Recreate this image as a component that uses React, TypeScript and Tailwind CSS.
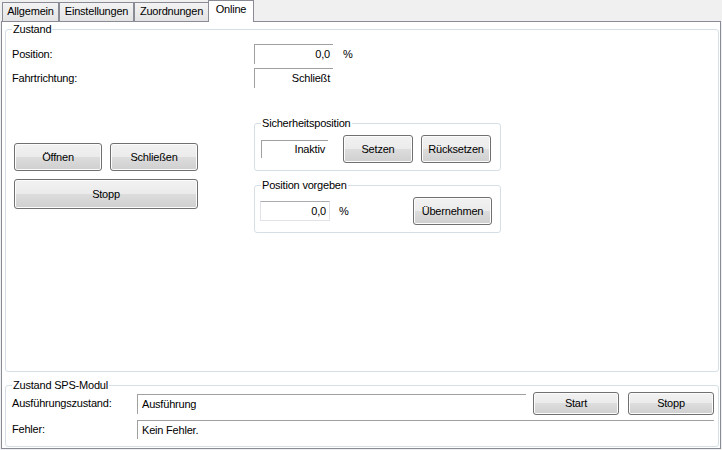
const btn =
  "flex shrink-0 items-center justify-center rounded-[3px] border border-[#707070] bg-[linear-gradient(to_bottom,#f2f2f2_0%,#ebebeb_50%,#dddddd_50%,#cfcfcf_100%)] shadow-[inset_0_0_0_1px_#fcfcfc] text-black";
const box3d = "flex shrink-0 items-center border-t border-l border-[#a0a0a0] text-black";
const group = "flex flex-col rounded-[3px] border border-[#d5dfe5]";
const legend = "-mt-[7px] ml-[6px] w-fit bg-white px-[1px]";

function Tab({ label, selected, w }: { label: string; selected?: boolean; w: string }) {
  if (selected) {
    return (
      <div
        className={`relative z-10 -mb-px -ml-[1px] flex h-[22px] justify-center border-t border-l border-r border-[#898c95] bg-white pt-[2px] ${w}`}
      >
        {label}
      </div>
    );
  }
  return (
    <div
      className={`flex h-[19px] justify-center border-t border-l border-r border-[#898c95] bg-[linear-gradient(to_bottom,#f3f3f3,#e3e3e3)] pt-[2px] ${w}`}
    >
      {label}
    </div>
  );
}

export default function App() {
  return (
    <div className="h-[450px] w-[722px] overflow-hidden bg-[#f0f0f0] font-['Liberation_Sans',Arial,sans-serif] text-[11px] leading-[13px] tracking-[-0.2px] text-black">
      {/* tab strip */}
      <div className="flex h-[21px] items-end pl-[2px]">
        <Tab label="Allgemein" w="w-[57px]" />
        <Tab label="Einstellungen" w="w-[75px]" />
        <Tab label="Zuordnungen" w="w-[75px]" />
        <Tab label="Online" w="w-[46px]" selected />
      </div>

      {/* tab page */}
      <div className="ml-[1px] flex h-[428px] w-[720px] flex-col border border-[#898c95] bg-white">
        {/* Zustand */}
        <div className={`${group} mt-[7px] ml-[3px] mr-[1px] h-[343px]`}>
          <div className={legend}>Zustand</div>

          <div className="mt-[8px] flex h-[20px] items-center">
            <div className="w-[248px] shrink-0 pl-[6px]">Position:</div>
            <div className={`${box3d} h-[20px] w-[79px] justify-end pr-[3px]`}>0,0</div>
            <div className="ml-[10px]">%</div>
          </div>
          <div className="mt-[4px] flex h-[20px] items-center">
            <div className="w-[248px] shrink-0 pl-[6px]">Fahrtrichtung:</div>
            <div className={`${box3d} h-[20px] w-[79px] justify-end pr-[3px]`}>Schließt</div>
          </div>

          <div className="mt-[35px] flex items-start">
            <div className="mt-[20px] ml-[8px] flex w-[184px] flex-col gap-[8px]">
              <div className="flex gap-[8px]">
                <button className={`${btn} h-[28px] w-[88px]`}>Öffnen</button>
                <button className={`${btn} h-[28px] w-[88px]`}>Schließen</button>
              </div>
              <button className={`${btn} h-[30px] w-[184px]`}>Stopp</button>
            </div>

            <div className="ml-[56px] flex w-[247px] flex-col">
              <div className={`${group} h-[48px]`}>
                <div className={legend}>Sicherheitsposition</div>
                <div className="mt-[5px] flex items-center">
                  <div className={`${box3d} ml-[6px] h-[18px] w-[67px] justify-end pr-[3px]`}>Inaktiv</div>
                  <button className={`${btn} ml-[15px] h-[28px] w-[70px]`}>Setzen</button>
                  <button className={`${btn} ml-[8px] h-[28px] w-[70px]`}>Rücksetzen</button>
                </div>
              </div>

              <div className={`${group} mt-[14px] h-[48px]`}>
                <div className={legend}>Position vorgeben</div>
                <div className="mt-[5px] flex items-center">
                  <div className="ml-[5px] flex h-[20px] w-[70px] items-center justify-end border border-[#e2e3ea] border-t-[#abadb3] pr-[3px]">
                    0,0
                  </div>
                  <div className="ml-[9px]">%</div>
                  <button className={`${btn} ml-auto mr-[8px] h-[28px] w-[79px]`}>Übernehmen</button>
                </div>
              </div>
            </div>
          </div>
        </div>

        {/* Zustand SPS-Modul */}
        <div className={`${group} mt-[13px] ml-[3px] mr-[1px] h-[62px]`}>
          <div className={legend}>Zustand SPS-Modul</div>
          <div className="flex h-[23px] items-center">
            <div className="w-[131px] shrink-0 pl-[6px]">Ausführungszustand:</div>
            <div className={`${box3d} h-[20px] w-[389px] pl-[4px]`}>Ausführung</div>
            <button className={`${btn} ml-[7px] h-[23px] w-[86px]`}>Start</button>
            <button className={`${btn} ml-[9px] h-[23px] w-[86px]`}>Stopp</button>
          </div>
          <div className="mt-[5px] flex h-[19px] items-center">
            <div className="w-[131px] shrink-0 pl-[6px]">Fehler:</div>
            <div className={`${box3d} h-[19px] w-[577px] pl-[4px]`}>Kein Fehler.</div>
          </div>
        </div>
      </div>
    </div>
  );
}
